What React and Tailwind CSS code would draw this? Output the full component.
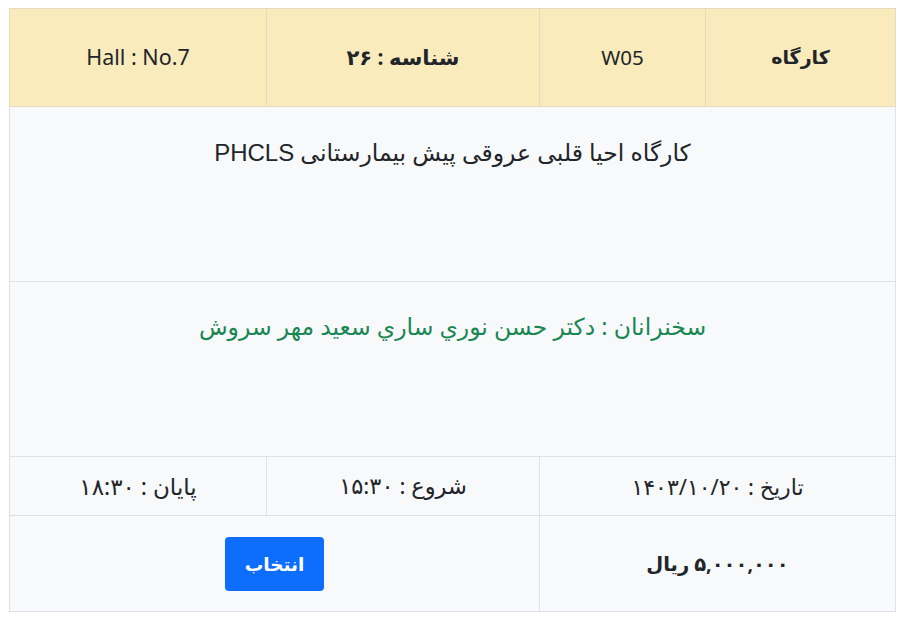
export default function App() {
  const font = { fontFamily: '"Noto Sans", "DejaVu Sans", sans-serif' };
  return (
    <div className="bg-white pt-[8px] pl-[9px] pb-[8px]" style={font}>
      <table dir="rtl" className="w-[887px] border-collapse border border-[#dee2e6] text-[20px] text-[#212529] table-fixed">
        <colgroup>
          <col className="w-[190px]" />
          <col className="w-[166px]" />
          <col className="w-[273px]" />
          <col className="w-[257px]" />
        </colgroup>
        <tbody>
          <tr className="bg-[#faebbd] h-[98px]">
            <td className="border border-[#e5dcbf] text-center font-bold text-[19px]">کارگاه</td>
            <td className="border border-[#e5dcbf] text-center text-[20.5px]">W05</td>
            <td className="border border-[#e5dcbf] text-center font-bold text-[21px]">شناسه : ۲۶</td>
            <td className="border border-[#e5dcbf] text-center text-[21.5px]">Hall : No.7</td>
          </tr>
          <tr className="bg-[#f8f9fa] h-[175px]">
            <td colSpan={4} className="border border-[#dee2e6] text-center align-top pt-[28px] text-[23.5px]">
              کارگاه احیا قلبی عروقی پیش بیمارستانی{" "}
              <span className="text-[24px]" style={{ fontFamily: '"Liberation Sans", sans-serif' }}>PHCLS</span>
            </td>
          </tr>
          <tr className="bg-[#f8f9fa] h-[175px]">
            <td colSpan={4} className="border border-[#dee2e6] text-center align-top pt-[27px] text-[#198754] text-[23.5px]">
              سخنرانان : دکتر حسن نوري ساري سعيد مهر سروش
            </td>
          </tr>
          <tr className="bg-[#f8f9fa] h-[59px]">
            <td colSpan={2} className="border border-[#dee2e6] text-center text-[22px]">تاریخ : ۱۴۰۳/۱۰/۲۰</td>
            <td className="border border-[#dee2e6] text-center text-[22.5px]">شروع : ۱۵:۳۰</td>
            <td className="border border-[#dee2e6] text-center text-[23px]">پایان : ۱۸:۳۰</td>
          </tr>
          <tr className="bg-[#f8f9fa] h-[96px]">
            <td colSpan={2} className="border border-[#dee2e6] text-center font-bold text-[19.5px]">۵,۰۰۰,۰۰۰ ریال</td>
            <td colSpan={2} className="border border-[#dee2e6] text-center">
              <button className="bg-[#0d6efd] text-white rounded-[4px] w-[99px] h-[54px] text-[18.5px] font-bold">
                انتخاب
              </button>
            </td>
          </tr>
        </tbody>
      </table>
    </div>
  );
}
